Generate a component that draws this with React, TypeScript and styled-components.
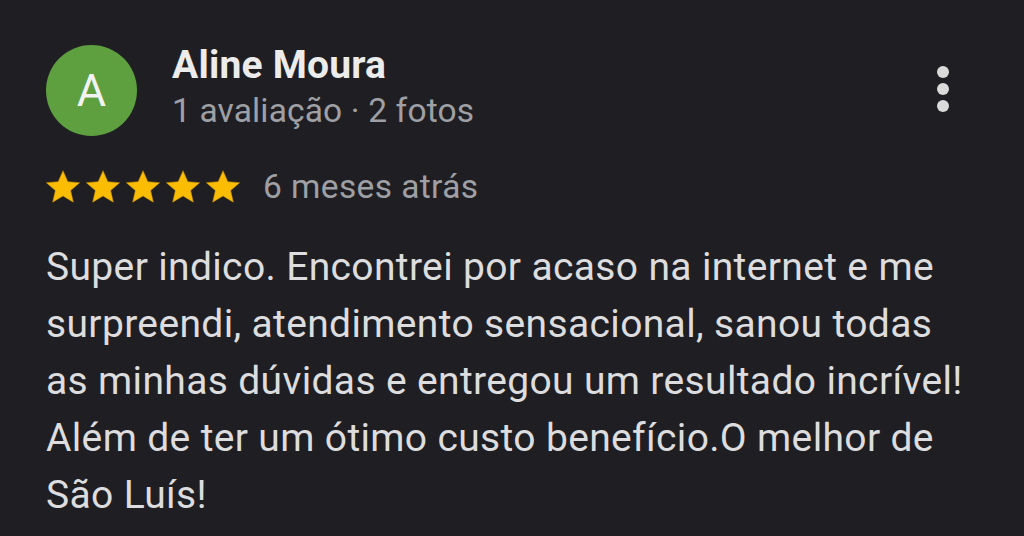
import React from 'react'
import styled, { createGlobalStyle } from 'styled-components'

const Global = createGlobalStyle`
  html, body {
    margin: 0;
    padding: 0;
    background: #1f1f23;
  }
  body {
    font-family: Roboto, "Noto Sans", Arial, sans-serif;
  }
`

const Card = styled.div`
  width: 1024px;
  height: 536px;
  box-sizing: border-box;
  padding: 45px 0 0 46px;
  background: #1f1f23;
  overflow: hidden;
`

const Header = styled.div`
  display: flex;
  align-items: flex-start;
`

const Avatar = styled.div`
  width: 91px;
  height: 91px;
  border-radius: 50%;
  background: #5e9f3f;
  color: #f2f2f2;
  display: flex;
  align-items: center;
  justify-content: center;
  font-size: 45px;
  flex-shrink: 0;
`

const Who = styled.div`
  display: flex;
  flex-direction: column;
  margin: -3px 0 0 35px;
  flex: 1;
`

const Name = styled.div`
  color: #ececec;
  font-size: 39px;
  font-weight: 700;
  line-height: 47px;
  letter-spacing: 0.2px;
`

const Meta = styled.div`
  color: #9fa0a5;
  font-size: 33.5px;
  line-height: 44px;
  letter-spacing: 0.15px;
`

const MenuButton = styled.div`
  display: flex;
  flex-direction: column;
  gap: 5px;
  margin: 21px 75px 0 0;
`

const Dot = styled.span`
  width: 12px;
  height: 12px;
  border-radius: 50%;
  background: #dadadb;
`

const RatingRow = styled.div`
  display: flex;
  align-items: center;
  margin: 31px 0 0 -3px;
`

const Stars = styled.div`
  display: flex;
`

const When = styled.span`
  color: #9fa0a5;
  font-size: 33.5px;
  line-height: 40px;
  letter-spacing: 0.4px;
  margin-left: 20px;
`

const Body = styled.p`
  margin: 32px 0 0 0;
  color: #dddddf;
  font-size: 39px;
  line-height: 57px;
  letter-spacing: 0.35px;
  width: 970px;
  white-space: nowrap;
`

const Star = () => (
  <svg width="40" height="40" viewBox="0 0 24 24">
    <path
      fill="#fbbc04"
      stroke="#c98f00"
      strokeWidth="0.3"
      strokeLinejoin="round"
      d="M12 2.2l2.9 6.6 7.1.6-5.4 4.7 1.6 7-6.2-3.7-6.2 3.7 1.6-7L2 9.4l7.1-.6z"
    />
  </svg>
)

const lines = [
  'Super indico. Encontrei por acaso na internet e me',
  'surpreendi, atendimento sensacional, sanou todas',
  'as minhas dúvidas e entregou um resultado incrível!',
  'Além de ter um ótimo custo benefício.O melhor de',
  'São Luís!',
]

export default function App() {
  return (
    <>
      <Global />
      <Card>
        <Header>
          <Avatar>A</Avatar>
          <Who>
            <Name>Aline Moura</Name>
            <Meta>1 avaliação · 2 fotos</Meta>
          </Who>
          <MenuButton>
            <Dot />
            <Dot />
            <Dot />
          </MenuButton>
        </Header>
        <RatingRow>
          <Stars>
            {[0, 1, 2, 3, 4].map((i) => (
              <Star key={i} />
            ))}
          </Stars>
          <When>6 meses atrás</When>
        </RatingRow>
        <Body>
          {lines.map((line, i) => (
            <React.Fragment key={i}>
              {line}
              {i < lines.length - 1 && <br />}
            </React.Fragment>
          ))}
        </Body>
      </Card>
    </>
  )
}
